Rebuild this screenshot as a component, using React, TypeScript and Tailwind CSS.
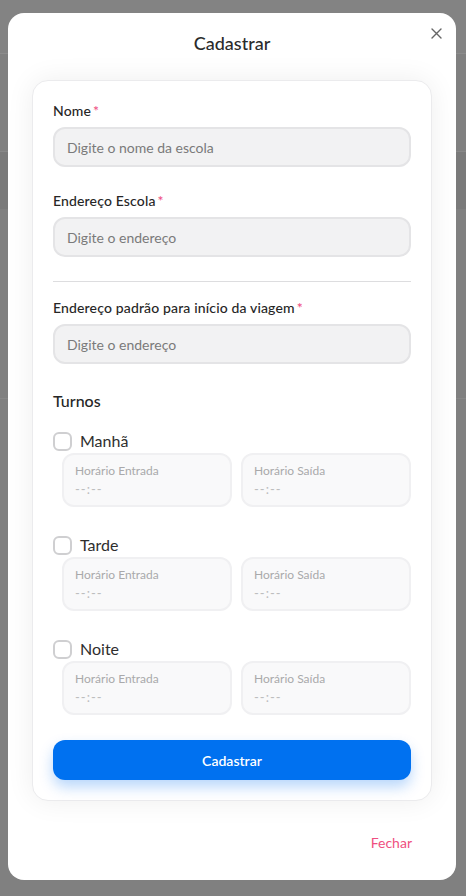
import React from "react";

const font = { fontFamily: 'Lato, "Noto Sans", sans-serif' };

function Label({ text }: { text: string }) {
  return (
    <div className="flex items-center text-[14px] leading-5 font-medium text-[#262626] mb-1.5 tracking-[0.15px]">
      <span>{text}</span>
      <span className="text-[#ee4a7e] ml-[2px]">*</span>
    </div>
  );
}

function Input({ placeholder }: { placeholder: string }) {
  return (
    <div className="h-10 rounded-xl bg-[#f2f2f3] border-2 border-[#e4e4e6] flex items-center px-[12px] text-[14px] text-[#7a7a7a]">
      {placeholder}
    </div>
  );
}

function TimeBox({ label }: { label: string }) {
  return (
    <div className="h-[54px] rounded-xl bg-[#f9f9fa] border-2 border-[#f0f0f2] px-[11px] pt-[8px]">
      <div className="text-[12px] leading-4 text-[#a9a9ab]">{label}</div>
      <div className="text-[13px] leading-4 mt-[2px] text-[#bdbdbf] tracking-[1px]">--:--</div>
    </div>
  );
}

function Shift({ name }: { name: string }) {
  return (
    <div className="flex flex-col">
      <div className="flex items-center h-5 gap-2">
        <div className="w-[19px] h-[19px] rounded-[6px] border-2 border-[#cfcfd1] bg-white" />
        <span className="text-[16px] text-[#2e2e2e]">{name}</span>
      </div>
      <div className="grid grid-cols-2 gap-[9px] ml-[9px] mt-[2px]">
        <TimeBox label="Horário Entrada" />
        <TimeBox label="Horário Saída" />
      </div>
    </div>
  );
}

export default function App() {
  return (
    <div className="relative w-[466px] h-[896px] bg-[#808080] overflow-hidden" style={font}>
      <div className="h-[54px] bg-[#838383] border-b border-[#8c8c8c]" />
      <div className="h-[97px]" />
      <div className="h-[58px] bg-[#7a7a7a] border-t border-[#888]" />
      <div className="h-[190px] border-b border-[#888]" />

      <div className="absolute left-[8px] top-[13px] w-[448px] h-[867px] bg-white rounded-[16px] flex flex-col pt-4 pb-[27px] px-6">
        <button className="absolute right-[14px] top-[14px] w-3 h-3 flex items-center justify-center text-[#666]">
          <svg width="11" height="11" viewBox="0 0 11 11" fill="none" stroke="currentColor" strokeWidth="1.4" strokeLinecap="round">
            <path d="M1 1L10 10M10 1L1 10" />
          </svg>
        </button>
        <h2 className="text-center text-[18px] leading-7 font-medium text-[#2b2b2b]">Cadastrar</h2>

        <div className="mt-[23px] rounded-[16px] bg-white border border-[#ebebed] shadow-[0_0_28px_rgba(0,0,0,0.07)] px-5 pt-5 pb-5 flex flex-col">
          <Label text="Nome" />
          <Input placeholder="Digite o nome da escola" />

          <div className="mt-6">
            <Label text="Endereço Escola" />
            <Input placeholder="Digite o endereço" />
          </div>

          <div className="h-px bg-[#dddddf] mt-6" />

          <div className="mt-4">
            <Label text="Endereço padrão para início da viagem" />
            <Input placeholder="Digite o endereço" />
          </div>

          <div className="mt-[25px] text-[16px] leading-6 font-medium text-[#262626]">Turnos</div>

          <div className="mt-[18px] flex flex-col gap-[28px]">
            <Shift name="Manhã" />
            <Shift name="Tarde" />
            <Shift name="Noite" />
          </div>

          <button className="mt-[25px] h-10 rounded-xl bg-[#0071f0] text-white text-[14px] font-semibold shadow-[0_7px_14px_rgba(0,113,240,0.28)]">
            Cadastrar
          </button>
        </div>

        <div className="mt-auto flex justify-end">
          <span className="text-[14px] leading-5 text-[#ef4f80] mr-[20px]">Fechar</span>
        </div>
      </div>
    </div>
  );
}
